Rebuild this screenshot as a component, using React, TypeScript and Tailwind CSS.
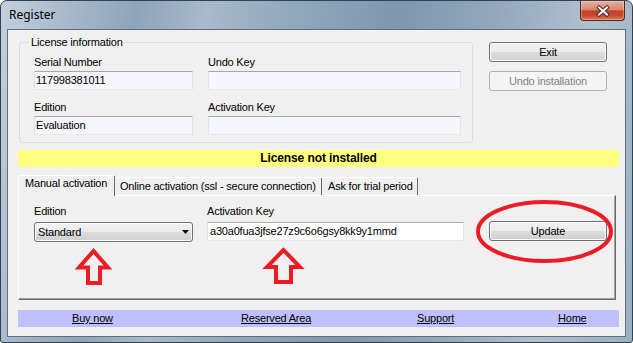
import React from "react";

const btn =
  "flex items-center justify-center rounded-[3px] border border-[#707070] bg-[linear-gradient(180deg,#f2f2f2_0%,#ebebeb_50%,#dddddd_50%,#cfcfcf_100%)] shadow-[inset_0_0_0_1px_#fcfcfc] text-black";

const roInput =
  "h-[19px] flex items-center pl-[1px] bg-[#f4f7fc] border border-[#dfe3ea] border-t-[#a6a8ae] border-b-[#e3e9ef]";

function ROField({ label, value }: { label: string; value: string }) {
  return (
    <div className="flex flex-col">
      <div className="h-[13px]">{label}</div>
      <div className={roInput + " mt-[2px]"}>{value}</div>
    </div>
  );
}

export default function App() {
  return (
    <div className="relative w-[633px] h-[343px] overflow-hidden rounded-t-[7px] rounded-b-[3px] border border-[#34404c] bg-[linear-gradient(100deg,#c3d1de_0%,#a9bbcc_9%,#8ea4ba_20%,#a8bacb_30%,#92a8bd_42%,#7f97ae_58%,#93a8bd_72%,#b0c0cf_86%,#9aafc3_100%)] font-['Liberation_Sans',Arial,sans-serif] text-[11px] leading-[13px] tracking-[-0.2px] text-black">
      {/* Title bar */}
      <div className="h-[28px] flex items-center pl-[8px] pb-[1px] font-['Segoe_UI','Noto_Sans',sans-serif] text-[12px] tracking-normal text-black">
        Register
      </div>
      <div className="absolute top-0 right-[7px] w-[45px] h-[20px] flex items-center justify-center rounded-b-[4px] border border-t-0 border-[#5a2418] bg-[linear-gradient(180deg,#e9ad9c_0%,#d9876f_45%,#c5432a_52%,#c8472c_75%,#e07a5b_100%)] shadow-[inset_0_0_0_1px_rgba(255,255,255,0.3)]">
        <svg width="14" height="12" viewBox="0 0 14 12">
          <path d="M3 2.5 L11 9.5 M11 2.5 L3 9.5" stroke="#4a2a24" strokeWidth="4" strokeLinecap="square" />
          <path d="M3 2.5 L11 9.5 M11 2.5 L3 9.5" stroke="#ffffff" strokeWidth="2" strokeLinecap="square" />
        </svg>
      </div>

      {/* Client area */}
      <div className="ml-[6px] w-[619px] h-[308px] border border-[#5f6f80] bg-[#f0f0f0] pl-[10px] flex flex-col">
        <div className="flex mt-[6px]">
          <fieldset className="ml-[1px] w-[454px] h-[107px] border border-[#d5dfe5] rounded-[3px]">
            <legend className="ml-[9px] px-[2px] leading-[13px]">License information</legend>
            <div className="grid grid-cols-[159px_253px] gap-x-[15px] gap-y-[11px] pl-[14px] pt-[7px]">
              <ROField label="Serial Number" value="117998381011" />
              <ROField label="Undo Key" value="" />
              <ROField label="Edition" value="Evaluation" />
              <ROField label="Activation Key" value="" />
            </div>
          </fieldset>
          <div className="ml-[16px] mt-[6px] flex flex-col gap-[9px]">
            <div className={btn + " w-[118px] h-[20px]"}>Exit</div>
            <div className="w-[118px] h-[20px] flex items-center justify-center rounded-[3px] border border-[#adb2b5] bg-[#f4f4f4] text-[#838383]">
              Undo installation
            </div>
          </div>
        </div>

        <div className="mt-[7px] w-[601px] h-[17px] bg-[#ffff80] flex items-center justify-center font-bold text-[12px] tracking-[-0.1px]">
          License not installed
        </div>

        {/* Tabs */}
        <div className="mt-[8px] h-[20px] flex items-end relative z-10">
          <div className="h-[21px] w-[97px] mb-[-1px] bg-[#f0f0f0] border-t border-l border-white border-r border-r-[#696969] rounded-t-[2px] pl-[6px] pt-[1px]">
            Manual activation
          </div>
          <div className="h-[18px] w-[207px] border-t border-white border-r border-r-[#696969] rounded-t-[2px] pl-[5px] pt-[2px] whitespace-nowrap">
            Online activation (ssl - secure connection)
          </div>
          <div className="h-[18px] w-[96px] border-t border-white border-r border-r-[#696969] rounded-t-[2px] pl-[6px] pt-[2px] whitespace-nowrap">
            Ask for trial period
          </div>
        </div>
        <div className="w-[598px] h-[105px] border border-t-white border-l-white border-r-[#696969] border-b-[#696969] shadow-[inset_-1px_-1px_0_#a0a0a0] flex pl-[15px] pt-[9px]">
          <div className="w-[159px] flex flex-col">
            <div className="h-[13px]">Edition</div>
            <div className={btn + " mt-[4px] h-[20px] !justify-between pl-[3px] pr-[3px]"}>
              <span>Standard</span>
              <svg width="7" height="4" viewBox="0 0 7 4">
                <path d="M0 0 H7 L3.5 4 Z" fill="#000" />
              </svg>
            </div>
          </div>
          <div className="ml-[14px] w-[257px] flex flex-col">
            <div className="h-[13px]">Activation Key</div>
            <div className="mt-[4px] h-[19px] flex items-center pl-[2px] bg-white border border-[#e2e3ea] border-t-[#abadb3] border-b-[#e3e9ef]">
              a30a0fua3jfse27z9c6o6gsy8kk9y1mmd
            </div>
          </div>
          <div className={btn + " ml-[25px] mt-[16px] w-[118px] h-[20px]"}>Update</div>
        </div>

        <div className="mt-[10px] w-[601px] h-[17px] bg-[#c0c0ff] flex items-center">
          <div className="w-[223px] pl-[54px]">
            <span className="underline">Buy now</span>
          </div>
          <div className="w-[176px]">
            <span className="underline">Reserved Area</span>
          </div>
          <div className="w-[141px]">
            <span className="underline">Support</span>
          </div>
          <div className="flex-1">
            <span className="underline">Home</span>
          </div>
        </div>
      </div>

      {/* Red annotations drawn over the dialog */}
      <svg
        className="absolute left-[-1px] top-[-1px] pointer-events-none"
        width="633"
        height="343"
        viewBox="0 0 633 343"
      >
        <path
          d="M93.5 251 L79 267.5 L88 267.5 L88 283 L100 283 L100 267.5 L108 267.5 Z"
          fill="none"
          stroke="#ed1c24"
          strokeWidth="4"
        />
        <path
          d="M283.5 250 L267 267 L276 267 L276 282 L291 282 L291 267 L300 267 Z"
          fill="none"
          stroke="#ed1c24"
          strokeWidth="4"
        />
        <ellipse cx="544.5" cy="231.5" rx="66.5" ry="29.5" fill="none" stroke="#ed1c24" strokeWidth="4" />
      </svg>
    </div>
  );
}
